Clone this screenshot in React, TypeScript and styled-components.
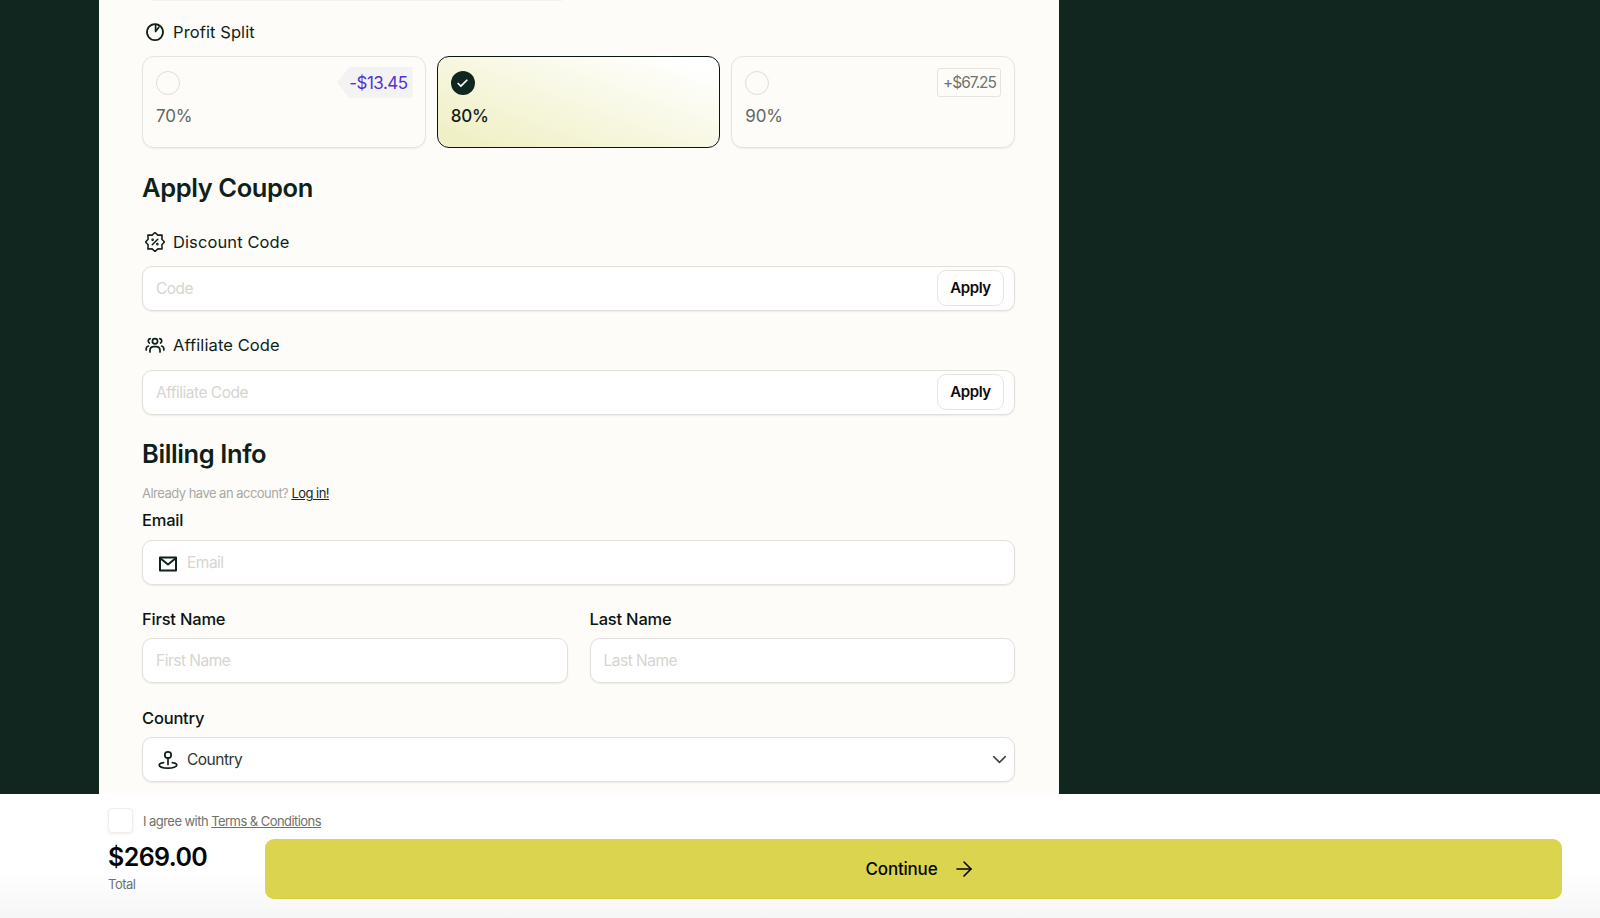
import React from "react";
import styled, { createGlobalStyle } from "styled-components";
import { ArrowRight, ChevronDown, Check } from "lucide-react";

const Global = createGlobalStyle`
  html, body { margin: 0; padding: 0; height: 918px; overflow: hidden; background: #122620; }
  * { box-sizing: border-box; }
  body { font-family: Inter, "Liberation Sans", sans-serif; color: #0f1f1a; }
`;

const Page = styled.div`
  height: 918px;
  display: flex;
  flex-direction: column;
`;
const Stage = styled.main`
  height: 794px;
  overflow: hidden;
  padding-left: 99px;
  background: #122620;
`;
const Panel = styled.div`
  width: 960px;
  height: 794px;
  background: #fdfcf9;
  padding: 0 44px 0 43px;
  display: flex;
  flex-direction: column;
`;
const TopRule = styled.div`
  width: 410px;
  height: 1px;
  margin-left: 10px;
  background: #f4f3ee;
`;
const FieldLabel = styled.div<{ $top: number; $bottom: number }>`
  display: flex;
  align-items: center;
  gap: 8px;
  height: 24px;
  margin-top: ${(p) => p.$top}px;
  margin-bottom: ${(p) => p.$bottom}px;
  font-size: 16.5px;
  font-weight: 400;
  letter-spacing: 0.1px;
  padding-left: 3px;
`;
const IconSlot = styled.svg`
  width: 20px;
  height: 20px;
  flex: none;
  fill: none;
  stroke: #0f1f1a;
  stroke-width: 1.7;
  stroke-linecap: round;
  stroke-linejoin: round;
`;
const Cards = styled.div`
  display: grid;
  grid-template-columns: repeat(3, 1fr);
  gap: 11px;
`;
const Card = styled.div<{ $on?: boolean }>`
  position: relative;
  height: 92px;
  border-radius: 12px;
  padding: 14px 13px;
  border: ${(p) => (p.$on ? "1.5px solid #0b1512" : "1px solid #e6e4df")};
  background: ${(p) => (p.$on ? "linear-gradient(200deg, #ffffff 8%, #f0f0c6 92%)" : "#fdfcf9")};
  box-shadow: ${(p) => (p.$on ? "none" : "0 1px 2px rgba(0,0,0,.06)")};
  display: flex;
  flex-direction: column;
  gap: 10px;
`;
const Radio = styled.span<{ $on?: boolean }>`
  width: 24px;
  height: 24px;
  border-radius: 50%;
  display: flex;
  align-items: center;
  justify-content: center;
  border: ${(p) => (p.$on ? "none" : "1px solid #dedcd7")};
  background: ${(p) => (p.$on ? "#122620" : "transparent")};
  color: #fff;
`;
const Percent = styled.span<{ $on?: boolean }>`
  font-size: 17px;
  line-height: 22px;
  letter-spacing: -0.2px;
  color: ${(p) => (p.$on ? "#0f1f1a" : "#63665f")};
  font-weight: ${(p) => (p.$on ? 500 : 400)};
`;
const SaveTag = styled.span`
  position: absolute;
  right: 12px;
  top: 10px;
  height: 31px;
  padding: 0 5px 0 12px;
  display: flex;
  align-items: center;
  background: #f4f3f3;
  color: #5431d0;
  font-size: 17px;
  letter-spacing: -0.5px;
  clip-path: polygon(12px 0, 100% 0, 100% 100%, 12px 100%, 0 50%);
`;
const AddTag = styled.span`
  position: absolute;
  right: 13px;
  top: 11px;
  height: 29px;
  padding: 0 4px 0 5px;
  display: flex;
  align-items: center;
  border: 1px solid #e6e4df;
  border-radius: 3px;
  color: #71736e;
  font-size: 15.5px;
  letter-spacing: -1px;
`;
const Heading = styled.h2<{ $top: number; $bottom: number }>`
  margin: ${(p) => p.$top}px 0 ${(p) => p.$bottom}px;
  font-size: 25.5px;
  line-height: 32px;
  font-weight: 600;
  letter-spacing: -0.4px;
  color: #0f1f1a;
`;
const InputBox = styled.div`
  position: relative;
  height: 45px;
  border: 1px solid #e2e0db;
  border-radius: 10px;
  background: #fff;
  box-shadow: 0 1px 2px rgba(0,0,0,.07);
  display: flex;
  align-items: center;
  padding: 0 13px;
  gap: 10px;
`;
const IconInputBox = styled(InputBox)`
  padding-left: 15px;
  gap: 9px;
`;
const Placeholder = styled.span<{ $dark?: boolean }>`
  font-size: 15.5px;
  letter-spacing: -0.5px;
  color: ${(p) => (p.$dark ? "#2b3531" : "#d6d5d0")};
  flex: 1;
`;
const ApplyButton = styled.button`
  position: absolute;
  right: 10px;
  top: 3px;
  width: 67px;
  height: 36px;
  border: 1px solid #e6e4df;
  border-radius: 9px;
  background: #fff;
  font: 600 15px Inter, "Liberation Sans", sans-serif;
  letter-spacing: -0.4px;
  color: #0a0a0a;
  padding: 0 0 2px;
`;
const Note = styled.div`
  margin-bottom: 7px;
  font-size: 13px;
  line-height: 18px;
  letter-spacing: -0.52px;
  color: #a9a9a4;
  a { color: #1c2623; text-decoration: underline; }
`;
const PlainLabel = styled.div<{ $gap?: number }>`
  font-size: 16.5px;
  line-height: 22px;
  letter-spacing: -0.2px;
  font-weight: 450;
  color: #0b1512;
  margin-bottom: ${(p) => p.$gap ?? 8}px;
`;
const FieldGap = styled.div`
  margin-top: 24px;
`;
const TwoCols = styled.div`
  display: grid;
  grid-template-columns: 1fr 1fr;
  gap: 22px;
  margin-top: 23px;
`;
const Footer = styled.footer`
  height: 124px;
  flex: none;
  background: linear-gradient(180deg, #ffffff 60%, #f6f6f6 100%);
  padding: 14px 38px 0 108px;
  display: flex;
  flex-direction: column;
`;
const AgreeRow = styled.div`
  display: flex;
  align-items: center;
  gap: 10px;
  height: 25px;
  font-size: 13px;
  letter-spacing: -0.55px;
  color: #6f716c;
  a { color: #6f716c; text-decoration: underline; }
`;
const CheckBox = styled.span`
  width: 25px;
  height: 25px;
  background: #fff;
  border: 1px solid #f0efec;
  border-radius: 4px;
  box-shadow: 0 1px 3px rgba(0,0,0,.08);
`;
const BuyRow = styled.div`
  display: flex;
  margin-top: 6px;
`;
const Totals = styled.div`
  width: 157px;
  flex: none;
`;
const Amount = styled.div`
  margin-top: 1px;
  font-size: 25px;
  line-height: 34px;
  font-weight: 600;
  letter-spacing: -0.6px;
  color: #050505;
`;
const TotalLabel = styled.div`
  font-size: 13px;
  line-height: 18px;
  margin-top: 1px;
  letter-spacing: -0.5px;
  color: #6f716c;
`;
const Continue = styled.button`
  flex: 1;
  height: 60px;
  border: none;
  border-bottom: 1px solid #d4d03a;
  border-radius: 9px;
  background: #dbd44f;
  display: flex;
  align-items: center;
  justify-content: center;
  gap: 15px;
  padding: 0 0 0 15px;
  font: 500 17px Inter, "Liberation Sans", sans-serif;
  letter-spacing: -0.2px;
  color: #050505;
`;
const SelectChevron = styled(ChevronDown)`
  margin-right: -10px;
  flex: none;
`;
const MailSlot = styled(IconSlot)`
  stroke-width: 2;
  margin-top: 3px;
`;

const TimerIcon = () => (
  <IconSlot viewBox="0 0 20 20">
    <path d="M7.2 2.6A8 8 0 1 0 12.8 2.6" />
    <path d="M7.2 2.6Q10 1.6 12.8 2.6" />
    <path d="M10.6 2.4V9.4L13.8 5.2" />
  </IconSlot>
);
const BadgeIcon = () => (
  <IconSlot viewBox="1 1 22 22">
    <path d="M12 1.6l3.14 2.82 4.66-.2-.22 4.64L22.4 12l-2.82 3.14.22 4.66-4.66-.22L12 22.4l-3.14-2.82-4.66.22.22-4.66L1.6 12l2.82-3.14-.22-4.66 4.66.22z" />
    <path d="M9 15l6-6" />
    <circle cx="9.4" cy="9.6" r=".6" />
    <circle cx="14.6" cy="14.4" r=".6" />
  </IconSlot>
);
const PeopleIcon = () => (
  <IconSlot viewBox="0 0 20 20">
    <circle cx="10" cy="6.2" r="2.6" />
    <path d="M5 17v-2a3.8 3.8 0 0 1 3.8-3.4h2.4A3.8 3.8 0 0 1 15 15v2" />
    <path d="M5.2 3.6A2.4 2.4 0 0 0 4.4 8" />
    <path d="M14.8 3.6A2.4 2.4 0 0 1 15.6 8" />
    <path d="M1.2 15v-1.6A3 3 0 0 1 3.4 11" />
    <path d="M18.8 15v-1.6A3 3 0 0 0 16.6 11" />
  </IconSlot>
);
const MailIcon = () => (
  <MailSlot viewBox="0 0 20 20">
    <path d="M2 3.5h16v13H2z" />
    <path d="M2 4l8 6.5L18 4" />
  </MailSlot>
);
const PinIcon = () => (
  <IconSlot viewBox="0 0 20 20">
    <circle cx="10" cy="5" r="3.2" />
    <path d="M10 8.2v6.3" />
    <path d="M5.6 12.6C3 13 1.2 13.8 1.2 15c0 1.8 3.9 3.2 8.8 3.2s8.8-1.4 8.8-3.2c0-1.2-1.8-2-4.4-2.4" />
  </IconSlot>
);

export default function App() {
  return (
    <Page>
      <Global />
      <Stage>
        <Panel>
          <TopRule />
          <FieldLabel $top={19} $bottom={12}><TimerIcon />Profit Split</FieldLabel>
          <Cards>
            <Card>
              <Radio />
              <Percent>70%</Percent>
              <SaveTag>-$13.45</SaveTag>
            </Card>
            <Card $on>
              <Radio $on><Check size={13} strokeWidth={3.2} /></Radio>
              <Percent $on>80%</Percent>
            </Card>
            <Card>
              <Radio />
              <Percent>90%</Percent>
              <AddTag>+$67.25</AddTag>
            </Card>
          </Cards>
          <Heading $top={24} $bottom={26}>Apply Coupon</Heading>
          <FieldLabel $top={0} $bottom={12}><BadgeIcon />Discount Code</FieldLabel>
          <InputBox>
            <Placeholder>Code</Placeholder>
            <ApplyButton>Apply</ApplyButton>
          </InputBox>
          <FieldLabel $top={22} $bottom={13}><PeopleIcon />Affiliate Code</FieldLabel>
          <InputBox>
            <Placeholder>Affiliate Code</Placeholder>
            <ApplyButton>Apply</ApplyButton>
          </InputBox>
          <Heading $top={23} $bottom={14}>Billing Info</Heading>
          <Note>Already have an account? <a>Log in!</a></Note>
          <PlainLabel $gap={9}>Email</PlainLabel>
          <IconInputBox>
            <MailIcon />
            <Placeholder>Email</Placeholder>
          </IconInputBox>
          <TwoCols>
            <div>
              <PlainLabel>First Name</PlainLabel>
              <InputBox><Placeholder>First Name</Placeholder></InputBox>
            </div>
            <div>
              <PlainLabel>Last Name</PlainLabel>
              <InputBox><Placeholder>Last Name</Placeholder></InputBox>
            </div>
          </TwoCols>
          <FieldGap>
            <PlainLabel>Country</PlainLabel>
            <IconInputBox>
              <PinIcon />
              <Placeholder $dark>Country</Placeholder>
              <SelectChevron size={23} color="#3d4441" strokeWidth={1.6} />
            </IconInputBox>
          </FieldGap>
        </Panel>
      </Stage>
      <Footer>
        <AgreeRow>
          <CheckBox />
          <span>I agree with <a>Terms &amp; Conditions</a></span>
        </AgreeRow>
        <BuyRow>
          <Totals>
            <Amount>$269.00</Amount>
            <TotalLabel>Total</TotalLabel>
          </Totals>
          <Continue>Continue <ArrowRight size={24} strokeWidth={1.6} /></Continue>
        </BuyRow>
      </Footer>
    </Page>
  );
}
